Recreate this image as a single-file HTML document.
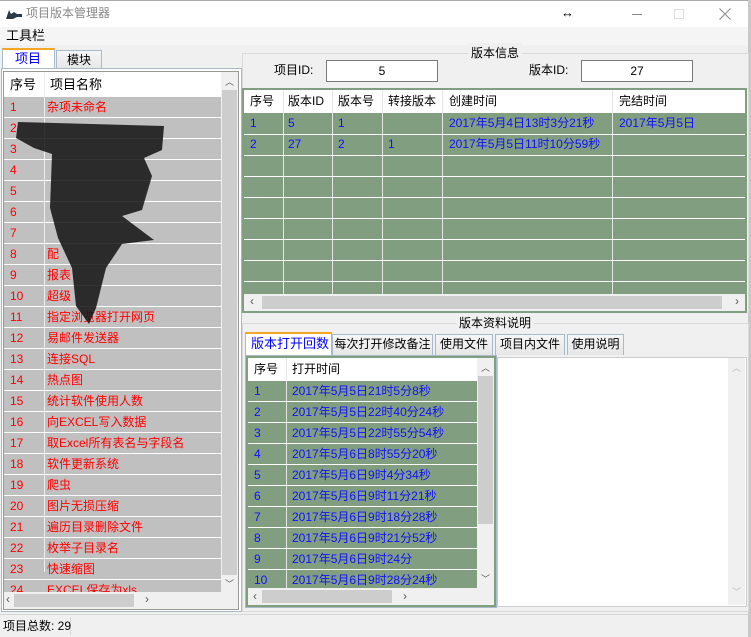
<!DOCTYPE html>
<html><head><meta charset="utf-8"><style>
*{box-sizing:border-box;margin:0;padding:0}
body{width:751px;height:637px;background:#f0f0f0;font-family:"Liberation Sans","Noto Sans CJK SC",sans-serif;font-size:12px;position:relative;overflow:hidden;color:#000}
.a{position:absolute}
.t{position:absolute;white-space:nowrap;line-height:21px}
.red{color:#ff0000}.blue{color:#1010ff}
.hl{position:absolute;height:1px;background:#fff}
.vl{position:absolute;width:1px;background:#fff}
.sb{position:absolute;background:#f0f0f0}
.th{position:absolute;background:#cdcdcd}
.tab{position:absolute;border:1px solid #a9b9c9;border-bottom:none;background:linear-gradient(#f6f6f6,#e6e6e6);text-align:center;line-height:19px;font-size:12px}
.grp{position:absolute;border:1px solid #d9d9d9}
.ar{position:absolute;font-size:9px;color:#555;line-height:10px}
</style></head><body>
<div class="a" style="left:0;top:0;width:751px;height:27px;background:#fff;border-top:1px solid #aaa"></div>
<svg class="a" style="left:5px;top:8px" width="18" height="12"><path d="M1 11 L4 2 L6 6 L9 4 L12 6 L17 6 L17 9 L12 9 L8 11 Z" fill="#2b3b4b"/></svg>
<div class="t" style="left:26px;top:3px;color:#888;font-size:12px">项目版本管理器</div>
<div class="t" style="left:561px;top:2px;font-size:13px;font-weight:bold">↔</div>
<div class="a" style="left:632px;top:14px;width:10px;height:1px;background:#888"></div>
<div class="a" style="left:674px;top:9px;width:10px;height:10px;border:1px solid #ddd"></div>
<svg class="a" style="left:719px;top:8px" width="12" height="12"><path d="M0.5 0.5L11.5 11.5M11.5 0.5L0.5 11.5" stroke="#888" stroke-width="1"/></svg>
<div class="a" style="left:748px;top:0;width:3px;height:637px;background:#c8c8c8"></div>
<div class="a" style="left:0;top:27px;width:748px;height:18px;background:#f5f5f5"></div>
<div class="t" style="left:6px;top:25px;font-size:13px">工具栏</div>
<div class="tab" style="left:56px;top:50px;width:46px;height:19px">模块</div>
<div class="a" style="left:2px;top:48px;width:53px;height:22px;background:#fff;border:1px solid #a9b9c9;border-top:2px solid #f5a623;border-bottom:none"></div>
<div class="t" style="left:15px;top:48px;color:#0000ff;font-size:13px">项目</div>
<div class="a" style="left:1px;top:68px;width:241px;height:544px;border:1px solid #a9b9c9;background:#fff"></div>
<div class="a" style="left:3px;top:71px;width:236px;height:539px;border:1px solid #999;background:#fff;overflow:hidden">
<div class="a" style="left:0;top:25px;width:218px;height:500px;background:#c0c0c0"></div>
<div class="vl" style="left:40px;top:0;height:500px;background:#eee"></div>
<div class="t" style="left:6px;top:2px;font-size:13px">序号</div>
<div class="t" style="left:46px;top:2px;font-size:13px">项目名称</div>
</div>
<div id="L" class="a" style="left:4px;top:97px;width:217px;height:495px;overflow:hidden"></div>
<svg class="a" style="left:14px;top:118px" width="150" height="210"><path d="M4 4 L150 8 L148 32 L130 40 L138 58 L128 92 L108 98 L140 122 L108 126 L92 150 L82 190 L75 206 L62 188 L58 150 L44 120 L36 90 L38 36 L20 30 L2 20Z" fill="#111" opacity="0.85"/></svg>
<div class="sb" style="left:221px;top:72px;width:17px;height:520px"></div>
<div class="th" style="left:222px;top:90px;width:15px;height:485px"></div>
<div class="ar" style="left:225px;top:77px">︿</div>
<div class="ar" style="left:225px;top:579px">﹀</div>
<div class="sb" style="left:4px;top:592px;width:234px;height:17px"></div>
<div class="th" style="left:14px;top:594px;width:120px;height:13px"></div>
<div class="t" style="left:6px;top:589px;color:#555">‹</div>
<div class="t" style="left:145px;top:589px;color:#555">›</div>
<div class="grp" style="left:242px;top:53px;width:507px;height:260px"></div>
<div class="t" style="left:468px;top:43px;background:#f0f0f0;padding:0 3px;font-size:12px">版本信息</div>
<div class="t" style="left:274px;top:60px;font-size:12px">项目ID:</div>
<div class="a" style="left:326px;top:60px;width:112px;height:22px;background:#fff;border:1px solid #7a7a7a;text-align:center;line-height:20px">5</div>
<div class="t" style="left:529px;top:60px;font-size:12px">版本ID:</div>
<div class="a" style="left:581px;top:60px;width:112px;height:22px;background:#fff;border:1px solid #7a7a7a;text-align:center;line-height:20px">27</div>
<div class="a" style="left:242px;top:88px;width:505px;height:225px;border:2px solid #819f80;background:#819f80;overflow:hidden">
<div class="a" style="left:0;top:0;width:503px;height:23px;background:#fff"></div>
<div class="vl" style="left:39px;top:0;height:210px;background:#e6e6e6"></div>
<div class="vl" style="left:88px;top:0;height:210px;background:#e6e6e6"></div>
<div class="vl" style="left:138px;top:0;height:210px;background:#e6e6e6"></div>
<div class="vl" style="left:198px;top:0;height:210px;background:#e6e6e6"></div>
<div class="vl" style="left:368px;top:0;height:210px;background:#e6e6e6"></div>
<div class="hl" style="left:0;top:44px;width:503px"></div>
<div class="hl" style="left:0;top:65px;width:503px"></div>
<div class="hl" style="left:0;top:86px;width:503px"></div>
<div class="hl" style="left:0;top:107px;width:503px"></div>
<div class="hl" style="left:0;top:128px;width:503px"></div>
<div class="hl" style="left:0;top:149px;width:503px"></div>
<div class="hl" style="left:0;top:170px;width:503px"></div>
<div class="hl" style="left:0;top:191px;width:503px"></div>
<div class="t" style="left:6px;top:1px">序号</div><div class="t" style="left:44px;top:1px">版本ID</div><div class="t" style="left:94px;top:1px">版本号</div><div class="t" style="left:144px;top:1px">转接版本</div><div class="t" style="left:205px;top:1px">创建时间</div><div class="t" style="left:375px;top:1px">完结时间</div>
<div class="t blue" style="left:6px;top:23px">1</div><div class="t blue" style="left:44px;top:23px">5</div><div class="t blue" style="left:94px;top:23px">1</div><div class="t blue" style="left:205px;top:23px">2017年5月4日13时3分21秒</div><div class="t blue" style="left:375px;top:23px">2017年5月5日</div>
<div class="t blue" style="left:6px;top:44px">2</div><div class="t blue" style="left:44px;top:44px">27</div><div class="t blue" style="left:94px;top:44px">2</div><div class="t blue" style="left:144px;top:44px">1</div><div class="t blue" style="left:205px;top:44px">2017年5月5日11时10分59秒</div>
<div class="sb" style="left:0;top:204px;width:503px;height:17px"></div>
<div class="th" style="left:18px;top:206px;width:460px;height:13px"></div>
<div class="t" style="left:6px;top:201px;color:#555">‹</div>
<div class="t" style="left:491px;top:201px;color:#555">›</div>
</div>
<div class="grp" style="left:242px;top:323px;width:507px;height:289px"></div>
<div class="t" style="left:456px;top:313px;background:#f0f0f0;padding:0 3px">版本资料说明</div>
<div class="tab" style="left:332px;top:334px;width:101px;height:21px">每次打开修改备注</div>
<div class="tab" style="left:435px;top:334px;width:58px;height:21px">使用文件</div>
<div class="tab" style="left:495px;top:334px;width:70px;height:21px">项目内文件</div>
<div class="tab" style="left:567px;top:334px;width:57px;height:21px">使用说明</div>
<div class="a" style="left:245px;top:332px;width:87px;height:24px;background:#fff;border:1px solid #a9b9c9;border-top:2px solid #f5a623;border-bottom:none"></div>
<div class="t" style="left:251px;top:333px;color:#0000ff;font-size:13px">版本打开回数</div>
<div class="a" style="left:245px;top:355px;width:252px;height:253px;border:1px solid #a9b9c9;background:#fff"></div>
<div class="a" style="left:246px;top:356px;width:250px;height:251px;border:2px solid #819f80;background:#fff;overflow:hidden">
<div class="a" style="left:0;top:23px;width:229px;height:210px;background:#819f80"></div>
<div class="vl" style="left:38px;top:0;height:230px;background:#e6e6e6"></div>
<div class="t" style="left:6px;top:1px">序号</div><div class="t" style="left:44px;top:1px">打开时间</div>
<div id="R"></div>
<div class="sb" style="left:229px;top:0;width:17px;height:231px"></div>
<div class="th" style="left:230px;top:18px;width:15px;height:148px"></div>
<div class="ar" style="left:233px;top:5px">︿</div>
<div class="ar" style="left:233px;top:216px">﹀</div>
<div class="sb" style="left:0;top:230px;width:246px;height:17px"></div>
<div class="th" style="left:14px;top:232px;width:130px;height:13px"></div>
<div class="t" style="left:5px;top:228px;color:#555">‹</div>
<div class="t" style="left:155px;top:228px;color:#555">›</div>
</div>
<div class="a" style="left:497px;top:357px;width:250px;height:250px;background:#fff;border:1px solid #ccc"></div>
<div class="sb" style="left:728px;top:358px;width:17px;height:247px"></div>
<div class="ar" style="left:732px;top:363px;color:#bbb">︿</div>
<div class="ar" style="left:732px;top:587px;color:#bbb">﹀</div>
<div class="a" style="left:0;top:614px;width:748px;height:1px;background:#d6d6d6"></div>
<div class="a" style="left:70px;top:617px;width:1px;height:18px;background:#d6d6d6"></div>
<div class="t" style="left:3px;top:616px;font-size:12px">项目总数: 29</div>
<script>
var names=["杂项未命名","","","","","","","配","报表","超级","指定浏览器打开网页","易邮件发送器","连接SQL","热点图","统计软件使用人数","向EXCEL写入数据","取Excel所有表名与字段名","软件更新系统","爬虫","图片无损压缩","遍历目录删除文件","枚举子目录名","快速缩图","EXCEL保存为xls"];
var h="";
for(var i=0;i<24;i++){var y=i*21;
h+='<div class="hl" style="left:0;top:'+(y+20)+'px;width:217px"></div>';
h+='<div class="t red" style="left:6px;top:'+y+'px;font-size:12px">'+(i+1)+'</div>';
h+='<div class="t red" style="left:43px;top:'+y+'px;font-size:12px">'+names[i]+'</div>';}
document.getElementById("L").innerHTML=h;
var t=["2017年5月5日21时5分8秒","2017年5月5日22时40分24秒","2017年5月5日22时55分54秒","2017年5月6日8时55分20秒","2017年5月6日9时4分34秒","2017年5月6日9时11分21秒","2017年5月6日9时18分28秒","2017年5月6日9时21分52秒","2017年5月6日9时24分","2017年5月6日9时28分24秒"];
h="";
for(i=0;i<10;i++){var y=23+i*21;
h+='<div class="hl" style="left:0;top:'+(y+20)+'px;width:229px"></div>';
h+='<div class="t blue" style="left:6px;top:'+y+'px">'+(i+1)+'</div><div class="t blue" style="left:44px;top:'+y+'px">'+t[i]+'</div>';}
document.getElementById("R").innerHTML=h;
</script>
</body></html>
